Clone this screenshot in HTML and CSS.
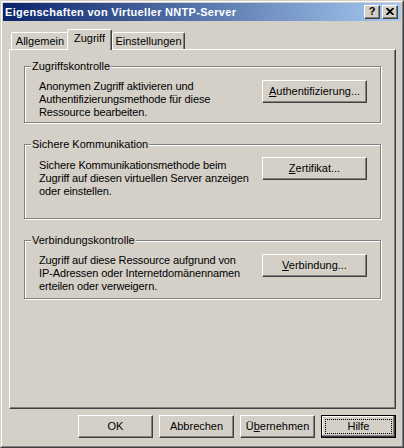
FILE: index.html
```html
<!DOCTYPE html>
<html lang="de">
<head>
<meta charset="utf-8">
<title>Eigenschaften von Virtueller NNTP-Server</title>
<link rel="stylesheet" href="styles.css">
</head>
<body>
<div class="window">
  <div class="frame">
    <div class="titlebar">
      <span class="title">Eigenschaften von Virtueller NNTP-Server</span>
      <span class="cap-btn help">?</span>
      <span class="cap-btn close">
        <svg width="8" height="7" viewBox="0 0 8 7"><path d="M0.5 0 L7.5 7 M7.5 0 L0.5 7" stroke="#000" stroke-width="1.8" fill="none"/></svg>
      </span>
    </div>
    <div class="client">
      <div class="tabs">
        <div class="tab t-allg">Allgemein</div>
        <div class="tab active t-zug">Zugriff</div>
        <div class="tab t-einst">Einstellungen</div>
      </div>
      <div class="panel">
        <div class="group g1">
          <div class="legend">Zugriffskontrolle</div>
          <div class="row">
            <p class="desc">Anonymen Zugriff aktivieren und<br>Authentifizierungsmethode für diese<br>Ressource bearbeiten.</p>
            <button class="btn btn-wide"><u>A</u>uthentifizierung...</button>
          </div>
        </div>
        <div class="group g2">
          <div class="legend">Sichere Kommunikation</div>
          <div class="row row-g2">
            <p class="desc desc-g2">Sichere Kommunikationsmethode beim<br>Zugriff auf diesen virtuellen Server anzeigen<br>oder einstellen.</p>
            <button class="btn btn-wide"><u>Z</u>ertifikat...</button>
          </div>
        </div>
        <div class="group g3">
          <div class="legend">Verbindungskontrolle</div>
          <div class="row row-g3">
            <p class="desc">Zugriff auf diese Ressource aufgrund von<br>IP-Adressen oder Internetdomänennamen<br>erteilen oder verweigern.</p>
            <button class="btn btn-wide"><u>V</u>erbindung...</button>
          </div>
        </div>
      </div>
      <div class="actions">
        <button class="btn">OK</button>
        <button class="btn">Abbrechen</button>
        <button class="btn">Ü<u>b</u>ernehmen</button>
        <button class="btn btn-default">Hilfe</button>
      </div>
    </div>
  </div>
</div>
</body>
</html>
```
FILE: styles.css
```css
html, body {
  margin: 0;
  padding: 0;
}
body {
  background: #D4D0C8;
  font: 11px "Liberation Sans", Arial, sans-serif;
  color: #000;
}
.window {
  width: 404px;
  height: 448px;
  box-sizing: border-box;
  border: 1px solid;
  border-color: #D4D0C8 #404040 #404040 #D4D0C8;
}
.frame {
  height: 100%;
  box-sizing: border-box;
  border: 1px solid;
  border-color: #fff #808080 #808080 #fff;
  padding: 1px;
  display: flex;
  flex-direction: column;
}
.titlebar {
  flex: none;
  height: 18px;
  margin-bottom: 1px;
  background: linear-gradient(to right, #0A246A, #A6CAF0);
  display: flex;
  align-items: center;
  padding: 0 3px 0 2px;
}
.title {
  flex: 1;
  color: #fff;
  font-weight: bold;
  font-size: 11px;
  letter-spacing: 0.3px;
  line-height: 13px;
  padding-top: 1px;
  white-space: nowrap;
}
.cap-btn {
  width: 16px;
  height: 14px;
  box-sizing: border-box;
  background: #D4D0C8;
  border: 1px solid;
  border-color: #fff #404040 #404040 #fff;
  box-shadow: inset -1px -1px #808080;
  display: flex;
  align-items: center;
  justify-content: center;
}
.help {
  font-weight: bold;
  font-size: 11px;
  line-height: 11px;
  padding-bottom: 1px;
}
.close {
  margin-left: 2px;
  padding-bottom: 1px;
}
.client {
  flex: 1;
  display: flex;
  flex-direction: column;
}
.tabs {
  display: flex;
  align-items: flex-end;
  height: 20px;
  margin: 7px 0 0 8px;
  position: relative;
  z-index: 1;
}
.tab {
  box-sizing: border-box;
  height: 17px;
  border: 1px solid;
  border-bottom: 0;
  border-color: #fff #404040 transparent #fff;
  box-shadow: inset -1px 0 #808080;
  border-radius: 2px 2px 0 0;
  background: #D4D0C8;
  text-align: center;
  padding-top: 2px;
  line-height: 13px;
  white-space: nowrap;
}
.tab.active {
  height: 21px;
  margin-left: -2px;
  margin-bottom: -1px;
}
.t-allg { width: 58px; }
.t-zug { width: 45px; }
.t-einst { width: 73px; }
.panel {
  height: 360px;
  box-sizing: border-box;
  margin: 0 5px 0 6px;
  border: 1px solid;
  border-color: #fff #404040 #404040 #fff;
  box-shadow: inset -1px -1px #808080;
  padding: 16px 14px 0;
}
.group {
  box-sizing: border-box;
  border: 1px solid #808080;
  box-shadow: inset 1px 1px #fff, 1px 1px #fff;
  padding: 0 12px 0 14px;
  display: flex;
  flex-direction: column;
}
.group + .group {
  margin-top: 21px;
}
.g1 { height: 57px; }
.g2 { height: 75px; }
.g3 { height: 59px; }
.legend {
  align-self: flex-start;
  margin: -7px 0 0 -8px;
  padding: 0 1px;
  background: #D4D0C8;
  line-height: 13px;
}
.row {
  display: flex;
  justify-content: space-between;
  align-items: flex-start;
  margin-top: 7px;
}
.row-g2 { margin-top: 6px; }
.desc {
  margin: 0;
  line-height: 13px;
  letter-spacing: -0.12px;
  white-space: nowrap;
}
.desc-g2 { margin-top: 2px; }
.btn {
  font: inherit;
  color: #000;
  box-sizing: border-box;
  width: 75px;
  height: 23px;
  padding: 0;
  margin: 0;
  background: #D4D0C8;
  border: 1px solid;
  border-color: #fff #404040 #404040 #fff;
  box-shadow: inset -1px -1px #808080;
  border-radius: 0;
  text-align: center;
  line-height: 13px;
  white-space: nowrap;
}
.btn-wide {
  width: 105px;
  margin-right: 1px;
}
.btn-default {
  border-color: #000;
  box-shadow: inset -1px -1px #404040, inset -2px -2px #808080, inset 1px 1px #fff;
  outline: 1px dotted #000;
  outline-offset: -5px;
}
.actions {
  display: flex;
  justify-content: flex-end;
  gap: 6px;
  margin: 6px 5px 0 0;
}
```
